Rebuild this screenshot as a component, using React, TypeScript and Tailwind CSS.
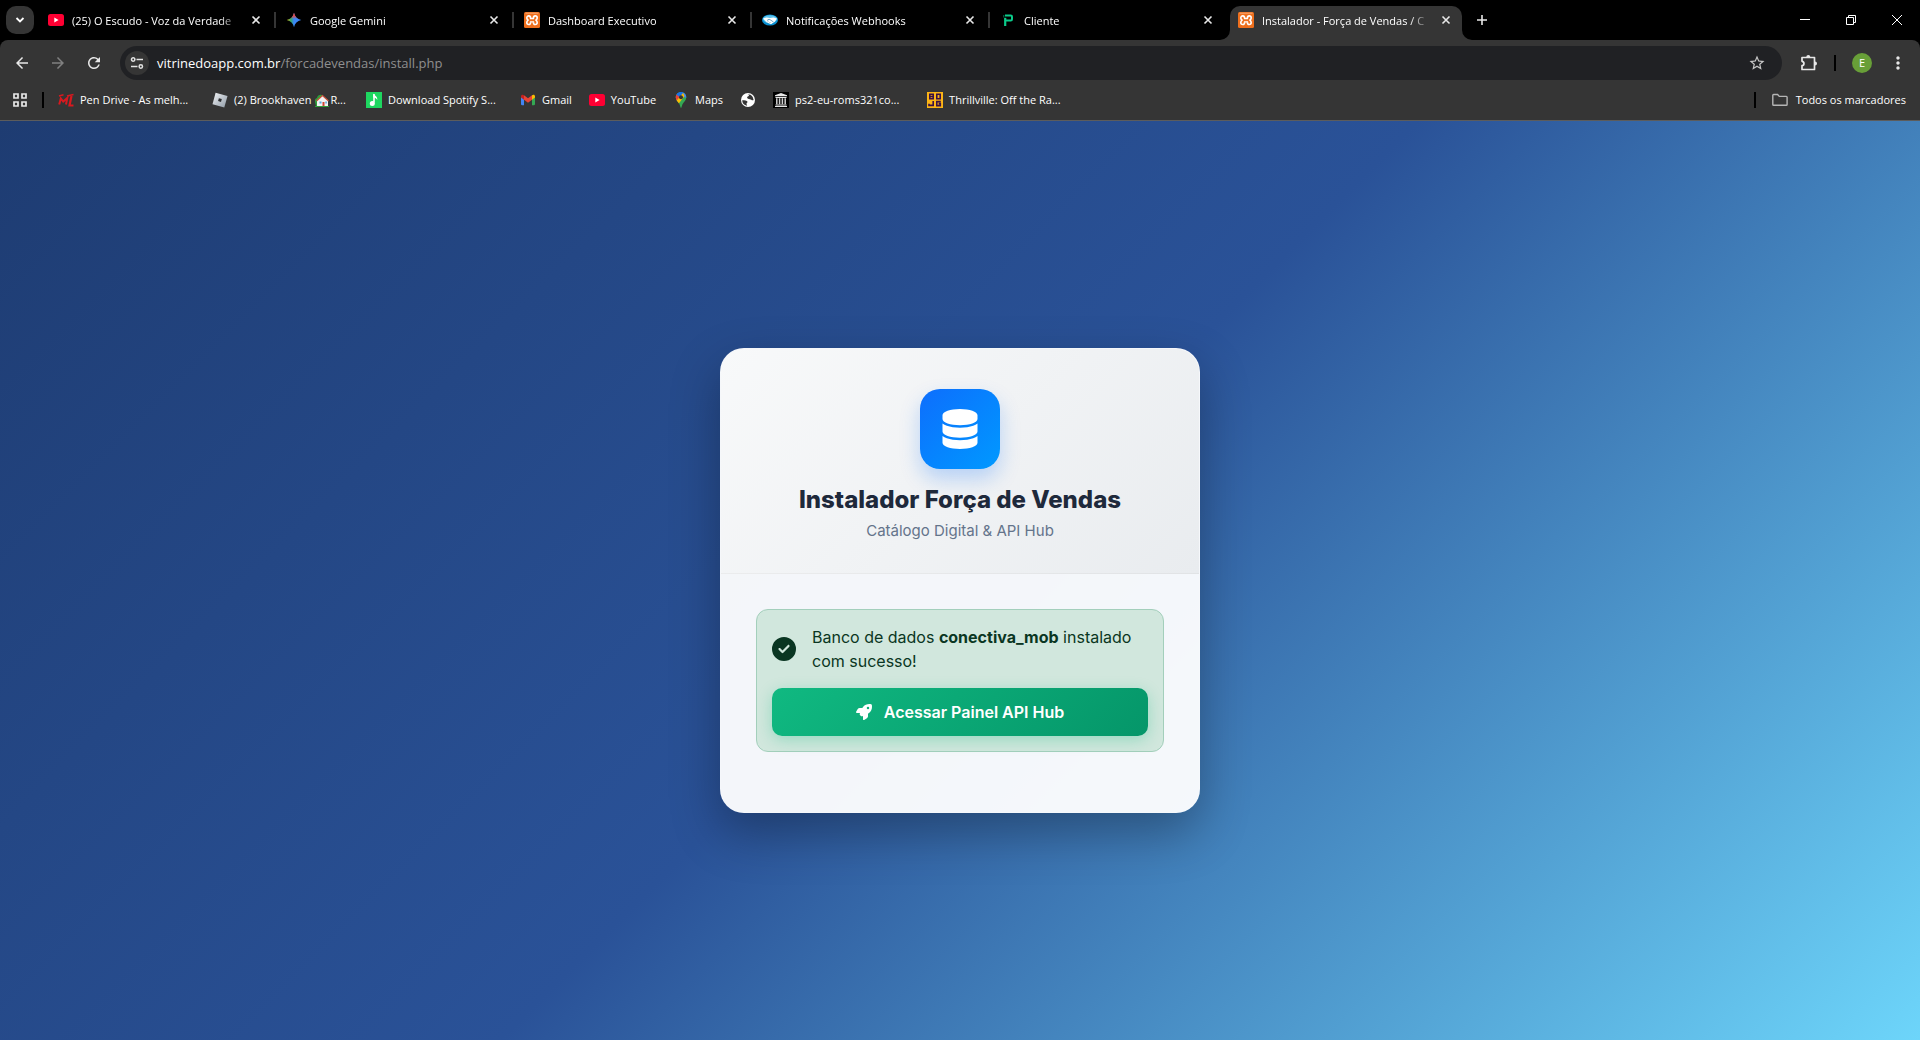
import { useState } from "react";
import type { ReactNode } from "react";
import { FaCircleCheck, FaDatabase, FaRocket } from "react-icons/fa6";
import {
  MdArrowBack,
  MdArrowForward,
  MdMoreVert,
  MdRefresh,
  MdStarBorder,
} from "react-icons/md";

function YouTubeIcon() {
  return (
    <svg viewBox="0 0 16 16" className="size-4 shrink-0">
      <rect y="2" width="16" height="12" rx="2.5" fill="#ff0033" />
      <path d="M6.3 5.6 10.6 8l-4.3 2.4z" fill="#fff" />
    </svg>
  );
}

function GeminiIcon() {
  return (
    <svg viewBox="0 0 16 16" className="size-4 shrink-0">
      <defs>
        <linearGradient id="gem-base" x1="0" y1="0.5" x2="1" y2="0.5">
          <stop offset="0" stopColor="#f5c518" />
          <stop offset="0.28" stopColor="#2fa866" />
          <stop offset="0.5" stopColor="#3b86f7" />
          <stop offset="1" stopColor="#3b86f7" />
        </linearGradient>
        <linearGradient id="gem-top" x1="0" y1="0" x2="0" y2="1">
          <stop offset="0" stopColor="#f0443a" />
          <stop offset="0.2" stopColor="#f0443a" />
          <stop offset="0.42" stopColor="#f0443a" stopOpacity="0" />
        </linearGradient>
      </defs>
      <path d="M8 .8c.9 4 3.200 6.300 7.200 7.200-4 .9-6.300 3.200-7.200 7.200C7.100 11.200 4.800 8.900.8 8 4.800 7.100 7.100 4.800 8 .8z" fill="url(#gem-base)" />
      <path d="M8 .8c.9 4 3.200 6.300 7.200 7.200-4 .9-6.300 3.200-7.200 7.200C7.100 11.200 4.800 8.900.8 8 4.800 7.100 7.100 4.800 8 .8z" fill="url(#gem-top)" />
    </svg>
  );
}

function XamppIcon() {
  return (
    <svg viewBox="0 0 16 16" className="size-4 shrink-0">
      <rect width="16" height="16" rx="1.5" fill="#ee6f1d" />
      <path d="M1.500 1.200h13" stroke="#f7b98a" strokeWidth="0.8" />
      <g fill="none" stroke="#fff" strokeWidth="1.600" strokeLinejoin="round">
        <path d="M6.600 6.200C6.600 4.700 6 3.900 4.800 3.900S2.800 4.700 2.800 5.900c0 1.100.5 1.600 1.300 2.300-.8.700-1.300 1.200-1.300 2.300 0 1.200.8 2 2 2s1.800-.8 1.800-2.300" />
        <path d="M9.400 6.200c0-1.500.6-2.300 1.800-2.300s2 .8 2 2c0 1.100-.5 1.600-1.300 2.300.8.700 1.300 1.200 1.300 2.300 0 1.200-.8 2-2 2s-1.800-.8-1.800-2.300" />
        <path d="M5.900 6.500h4.200M5.900 9.900h4.200" strokeWidth="1.400" />
      </g>
    </svg>
  );
}

function HandshakeIcon() {
  return (
    <svg viewBox="0 0 16 16" className="size-4 shrink-0">
      <ellipse cx="8" cy="8" rx="8" ry="5.500" fill="#0a8fd0" />
      <ellipse cx="8" cy="7.200" rx="6.800" ry="4" fill="#5cc3ee" />
      <path d="M1 6.500 4.500 5.600 8 6l3.500-.5 3.500 1-2.300 3.300L9 12.200l-4-1.700z" fill="#fff" />
      <path d="m5 8.500 2-1.300 1.500.8 3 2M5.500 10l1-.8M7.500 11l.8-.8" stroke="#0a6ea6" strokeWidth="0.6" fill="none" />
    </svg>
  );
}

function PIcon() {
  return (
    <svg viewBox="0 0 16 16" className="size-4 shrink-0">
      <path d="M5 3.500h5.700c.8 0 1.300.5 1.300 1.300v2.400c0 .8-.5 1.300-1.300 1.300H6" fill="none" stroke="#0bcb8a" strokeWidth="2" />
      <path d="M5.200 5.800V14" stroke="#0bcb8a" strokeWidth="2.200" />
      <path d="M3.800 3v2.500" stroke="#067a55" strokeWidth="1" />
    </svg>
  );
}

function CloseIcon() {
  return (
    <svg viewBox="0 0 12 12" className="size-3" stroke="#e8e8e8" strokeWidth="1.600">
      <path d="m2.500 2.500 7 7M9.500 2.500l-7 7" />
    </svg>
  );
}

function PenDriveIcon() {
  return (
    <svg viewBox="0 0 16 16" className="size-4 shrink-0" fill="none" stroke="#d8191f">
      <path d="M1.200 12.500 2.800 6.500 5.200 9.500 9.300 6 8 12.500" strokeWidth="2" />
      <path d="M13.500 4 11.500 13.500h4" strokeWidth="2.200" />
      <path d="M1 4 5.500 2.800M9 4 15.500 2.500" strokeWidth="1.600" />
    </svg>
  );
}

function RobloxIcon() {
  return (
    <svg viewBox="0 0 16 16" className="size-4 shrink-0">
      <defs>
        <linearGradient id="rbx" x1="0" y1="0" x2="1" y2="1">
          <stop offset="0" stopColor="#f2f4f6" />
          <stop offset="1" stopColor="#8d99a5" />
        </linearGradient>
      </defs>
      <path d="M3.600.8 15.500 4 12.300 15.500.500 12.300z" fill="url(#rbx)" />
      <path d="m6.900 6.200 2.900.8-.8 2.900-2.900-.8z" fill="#2b2d30" />
    </svg>
  );
}

function HouseIcon() {
  return (
    <svg viewBox="0 0 14 14" className="mx-[1px] inline-block size-[14px] align-[-3px]">
      <path d="M0 9a3 3 0 0 1 2-4 3.500 3.500 0 0 1 5-3l2 11H1z" fill="#2f9e3a" />
      <path d="M2 7.500 7.500 2.500l5.500 5V13H2z" fill="#f3f3f3" />
      <path d="M1.500 8 7.500 2.500l6 5.500" fill="none" stroke="#c9503a" strokeWidth="1.200" />
      <path d="M7.500 9h2v4h-2z" fill="#cf4436" />
      <path d="M4.500 8.500h2v2h-2zM10.300 8.500h1.500v2h-1.500z" fill="#56a9e0" />
      <path d="M0 13.500h14" stroke="#2f9e3a" />
    </svg>
  );
}

function MusicIcon() {
  return (
    <svg viewBox="0 0 16 16" className="size-4 shrink-0">
      <rect width="16" height="16" fill="#1ed760" />
      <path d="M8 2v8.500" stroke="#fff" strokeWidth="1.600" />
      <path d="M7.300 1.500c.9 2 4.500 2.600 4 6.500-.8-1.600-2-2.300-4-2.500z" fill="#fff" />
      <circle cx="6.300" cy="11.600" r="2.500" fill="#fff" />
    </svg>
  );
}

function GmailIcon() {
  return (
    <svg viewBox="0 0 16 16" className="size-4 shrink-0">
      <path d="M1 4.500V12a1.200 1.200 0 0 0 1.200 1.200H4V7z" fill="#4285f4" />
      <path d="M15 4.500V12a1.200 1.200 0 0 1-1.200 1.200H12V7z" fill="#34a853" />
      <path d="M4 3.300v4.500l4 3 4-3V3.300l-4 3z" fill="#ea4335" />
      <path d="M1 4.300v1.300l3 2.200V3.300l-.8-.4C2.200 2.300 1 3 1 4.300z" fill="#c5221f" />
      <path d="M15 4.300v1.300l-3 2.200V3.300l.8-.4c1-.6 2.200.1 2.200 1.400z" fill="#fbbc04" />
    </svg>
  );
}

function MapsIcon() {
  return (
    <svg viewBox="0 0 16 16" className="size-4 shrink-0">
      <defs>
        <clipPath id="pin">
          <path d="M8 0a5.300 5.300 0 0 1 5.300 5.300c0 3-2.400 4.400-3.800 7C8.800 13.600 8.700 16 8 16s-.8-2.400-1.500-3.700c-1.400-2.600-3.800-4-3.800-7A5.300 5.300 0 0 1 8 0z" />
        </clipPath>
      </defs>
      <g clipPath="url(#pin)">
        <path d="M0 0h16v16H0z" fill="#34a853" />
        <path d="M16 0v6L10 5 7 3l3-3z" fill="#4285f4" />
        <path d="M2 3 5 0h6L6.500 5.500z" fill="#1a73e8" />
        <path d="M2 1.500 6.500 5 2.500 9.500z" fill="#ea4335" />
        <path d="M2.500 9.500 10 1l1.500 3-6.500 8.500z" fill="#fbbc04" />
        <path d="M2 2.500 6 5.500 3 9z" fill="#ea4335" />
        <path d="M4 0h6L7 4 3 2z" fill="#1a73e8" />
      </g>
      <circle cx="8" cy="5.300" r="2" fill="#353535" />
    </svg>
  );
}

function GlobeIcon() {
  return (
    <svg viewBox="0 0 16 16" className="size-4 shrink-0">
      <circle cx="8" cy="8" r="7" fill="#fff" />
      <path d="M2.200 8.200c2.500 0 4.800.2 5.300 1.500.3 1-1.200 1.200-1 2.200.1.800.8 1.200.6 1.800C4 13.300 2.200 11 2.200 8.200z" fill="#353535" />
      <path d="M7.500 2.300c2 0 4 .7 5.200 2.700l.9 3c-1.300 1-2.400-.4-3.800-.7C8.600 7 7.200 7 7.100 5.600 7 4.400 8.800 4.600 9 3.600c.1-.6-.9-.9-1.500-1.300z" fill="#353535" />
    </svg>
  );
}

function ArchiveIcon() {
  return (
    <svg viewBox="0 0 16 16" className="size-4 shrink-0">
      <path d="M0 0h16v16H0z" fill="#000" />
      <path d="m8 1 6 2.300v.9H2v-.9zM2.500 4.900h11v1h-11zM2.500 12.500h11v.9h-11zM2 14h12v1H2z" fill="#e6e6e6" />
      <path d="M3.800 6.200v6M6.600 6.200v6M9.400 6.200v6M12.200 6.200v6" stroke="#d0d0d0" strokeWidth="1.500" />
    </svg>
  );
}

function RetroIcon() {
  return (
    <svg viewBox="0 0 16 16" className="size-4 shrink-0">
      <path d="M0 0h16v16H0z" fill="#fbb416" />
      <g fill="none" stroke="#3a1145" strokeWidth="1.600">
        <path d="M2.800 2.300h3.400v4.400H2.800zM2.800 4.500h3.400M9.800 2.300h3.400v4.400H9.800z" />
        <path d="M6.200 9v4.400H2v-1.600M13.800 9.600h-4v4h3.500v-2h-1.600" />
      </g>
    </svg>
  );
}

function TuneIcon() {
  return (
    <svg viewBox="0 0 14 14" className="size-[14px]" fill="none" stroke="#e3e3e3" strokeWidth="1.500">
      <circle cx="3.200" cy="3.500" r="1.700" />
      <path d="M6.500 3.500H13" />
      <circle cx="10.800" cy="10.500" r="1.700" />
      <path d="M1 10.500h6.500" />
    </svg>
  );
}

function PuzzleIcon() {
  return (
    <svg viewBox="0 0 18 18" className="size-[18px]">
      <path
        d="M2 3.500h12.500v12H2v-3.800c2.600-.3 2.600-4.100 0-4.400z"
        fill="none"
        stroke="#e8e8e8"
        strokeWidth="1.700"
        strokeLinejoin="round"
      />
      <path d="M6.300 3a2 2 0 0 1 4 0zM15 7.500a2 2 0 0 1 0 4z" fill="#e8e8e8" />
    </svg>
  );
}

const tabs = [
  { title: "(25) O Escudo - Voz da Verdade", icon: <YouTubeIcon /> },
  { title: "Google Gemini", icon: <GeminiIcon /> },
  { title: "Dashboard Executivo", icon: <XamppIcon /> },
  { title: "Notificações Webhooks", icon: <HandshakeIcon /> },
  { title: "Cliente", icon: <PIcon /> },
  { title: "Instalador - Força de Vendas / C", icon: <XamppIcon /> },
];

const bookmarks: { label: ReactNode; icon: ReactNode; long?: boolean }[] = [
  { label: "Pen Drive - As melh...", icon: <PenDriveIcon />, long: true },
  { label: <>(2) Brookhaven <HouseIcon />R...</>, icon: <RobloxIcon />, long: true },
  { label: "Download Spotify S...", icon: <MusicIcon />, long: true },
  { label: "Gmail", icon: <GmailIcon /> },
  { label: "YouTube", icon: <YouTubeIcon /> },
  { label: "Maps", icon: <MapsIcon /> },
  { label: "", icon: <GlobeIcon /> },
  { label: "ps2-eu-roms321co...", icon: <ArchiveIcon />, long: true },
  { label: "Thrillville: Off the Ra...", icon: <RetroIcon />, long: true },
];

function TabFoot({ side }: { side: "left" | "right" }) {
  return (
    <svg
      viewBox="0 0 10 10"
      className={
        side === "left"
          ? "absolute bottom-0 -left-[10px] size-[10px]"
          : "absolute bottom-0 -right-[10px] size-[10px]"
      }
    >
      <path
        d={side === "left" ? "M10 0v10H0A10 10 0 0 0 10 0z" : "M0 0v10h10A10 10 0 0 1 0 0z"}
        fill="#353535"
      />
    </svg>
  );
}

function TabStrip() {
  const active = tabs.length - 1;

  return (
    <div className="flex h-10 items-end bg-black pl-[6px]">
      <button
        type="button"
        aria-label="Pesquisar guias"
        className="mb-[6px] flex size-7 shrink-0 items-center justify-center rounded-[10px] bg-[#353535]"
      >
        <svg viewBox="0 0 12 12" className="size-3" fill="none" stroke="#fff" strokeWidth="1.800">
          <path d="m2.500 4 3.500 3.500L9.500 4" />
        </svg>
      </button>
      <div className="ml-1 flex min-w-0 flex-1">
        {tabs.map((tab, i) => (
          <div
            key={tab.title}
            className={
              i === active
                ? "relative ml-[2px] flex h-[34px] w-[232px] min-w-0 items-center rounded-t-[10px] bg-[#353535] pr-[10px] pb-[6px] pl-2"
                : "relative flex h-[34px] w-[238px] min-w-0 items-center pr-[14px] pb-[6px] pl-[10px]"
            }
          >
            {i === active && <TabFoot side="left" />}
            {i === active && <TabFoot side="right" />}
            {tab.icon}
            <span className="ml-2 min-w-0 flex-1 overflow-hidden [mask-image:linear-gradient(to_right,#000_calc(100%-20px),transparent)] pt-[2px] text-[11px] leading-4 whitespace-nowrap text-white">
              {tab.title}
            </span>
            <button type="button" aria-label="Fechar guia" className="ml-[10px] shrink-0">
              <CloseIcon />
            </button>
            {i < active - 1 && (
              <span className="absolute top-[6px] right-0 h-4 w-[2px] bg-[#353535]" />
            )}
          </div>
        ))}
        <button
          type="button"
          aria-label="Nova guia"
          className="ml-[14px] flex h-[28px] w-3 shrink-0 items-center"
        >
          <svg viewBox="0 0 12 12" className="size-3" stroke="#e8e8e8" strokeWidth="1.600">
            <path d="M6 1v10M1 6h10" />
          </svg>
        </button>
      </div>
      <div className="flex h-10 shrink-0">
        <button type="button" aria-label="Minimizar" className="flex w-[46px] items-center justify-center">
          <svg viewBox="0 0 10 10" className="size-[10px]" stroke="#fff"><path d="M0 4.500h10" /></svg>
        </button>
        <button type="button" aria-label="Restaurar" className="flex w-[46px] items-center justify-center">
          <svg viewBox="0 0 10 10" className="size-[10px]" fill="none" stroke="#fff">
            <path d="M.5 2.500h7v7h-7zM2.500 2.500v-2h7v7h-2" />
          </svg>
        </button>
        <button type="button" aria-label="Fechar" className="flex w-[46px] items-center justify-center">
          <svg viewBox="0 0 10 10" className="size-[10px]" stroke="#fff"><path d="m0 0 10 10M10 0 0 10" /></svg>
        </button>
      </div>
    </div>
  );
}

function Toolbar() {
  const [url, setUrl] = useState("vitrinedoapp.com.br/forcadevendas/install.php");
  const slash = url.indexOf("/");
  const host = slash < 0 ? url : url.slice(0, slash);
  const path = slash < 0 ? "" : url.slice(slash);

  return (
    <div className="flex h-[46px] items-center rounded-t-lg bg-[#353535] py-[6px] text-[#e8e8e8]">
      <button type="button" aria-label="Voltar" className="ml-[13px]">
        <MdArrowBack className="size-[18px]" />
      </button>
      <button type="button" aria-label="Avançar" className="ml-[18px] text-[#808080]">
        <MdArrowForward className="size-[18px]" />
      </button>
      <button type="button" aria-label="Recarregar" className="ml-[18px]">
        <MdRefresh className="size-[18px]" />
      </button>
      <div className="ml-[17px] flex h-[34px] flex-1 items-center rounded-full bg-[#202124] pr-4 pl-[5px]">
        <button
          type="button"
          aria-label="Informações do site"
          className="flex size-6 items-center justify-center rounded-full bg-[#353535]"
        >
          <TuneIcon />
        </button>
        {/* the input keeps its own text invisible, the overlay dims the path */}
        <div className="relative ml-2 h-5 flex-1 text-[13px] leading-5">
          <span aria-hidden="true" className="pointer-events-none absolute inset-0 text-white">
            {host}
            <span className="text-[#8f8f8f]">{path}</span>
          </span>
          <input
            type="text"
            aria-label="Barra de endereço"
            value={url}
            onChange={(e) => setUrl(e.target.value)}
            className="block w-full bg-transparent text-transparent caret-white outline-none"
          />
        </div>
        <button type="button" aria-label="Adicionar aos favoritos">
          <MdStarBorder className="size-[18px] text-[#c7c7c7]" />
        </button>
      </div>
      <button type="button" aria-label="Extensões" className="ml-[18px]">
        <PuzzleIcon />
      </button>
      <span className="ml-4 h-4 w-[2px] bg-black" />
      <button
        type="button"
        aria-label="Perfil"
        className="ml-4 flex size-5 items-center justify-center rounded-full bg-[#689f38] text-[11px] text-white"
      >
        E
      </button>
      <button type="button" aria-label="Menu" className="mr-3 ml-4">
        <MdMoreVert className="size-5" />
      </button>
    </div>
  );
}

function BookmarksBar() {
  return (
    <nav className="flex h-[35px] items-center border-b border-[#5c5c5c] bg-[#353535] pr-[14px] pb-[6px] pl-[13px] text-[11px] leading-4 text-white">
      <button type="button" aria-label="Aplicativos">
        <svg viewBox="0 0 14 14" className="size-[14px]" fill="none" stroke="#e8e8e8" strokeWidth="1.700">
          <path d="M1 1h4v4H1zM9 1h4v4H9zM1 9h4v4H1zM9 9h4v4H9z" />
        </svg>
      </button>
      <span className="ml-[15px] h-4 w-[2px] bg-black" />
      <div className="ml-[14px] flex min-w-0 flex-1 gap-[17px] overflow-hidden">
        {bookmarks.map((b, i) => (
          <a key={i} href="#" className="flex shrink-0 items-center gap-[6px]">
            {b.icon}
            {b.label && (
              <span className={b.long ? "w-[115px] whitespace-nowrap" : "whitespace-nowrap"}>
                {b.label}
              </span>
            )}
          </a>
        ))}
      </div>
      <span className="h-4 w-[2px] shrink-0 bg-black" />
      <a href="#" className="ml-4 flex shrink-0 items-center gap-2">
        <svg viewBox="0 0 16 16" className="size-4" fill="none" stroke="#b5b5b5" strokeWidth="1.400">
          <path d="M.8 12.500V3.300c0-.5.3-.8.800-.8h4l1.700 1.900h7c.5 0 .8.300.8.800v7.300c0 .5-.3.800-.8.800H1.600c-.5 0-.8-.3-.8-.8z" />
        </svg>
        Todos os marcadores
      </a>
    </nav>
  );
}

export default function App() {
  return (
    <div className="flex min-h-screen flex-col bg-black">
      <header className="font-['Open_Sans','Noto_Sans',sans-serif]">
        <TabStrip />
        <Toolbar />
        <BookmarksBar />
      </header>
      <main className="flex flex-1 items-center justify-center bg-[linear-gradient(135deg,#1e3c72_0%,#2a5298_50%,#6dd5fa_100%)] p-5 font-['Inter',sans-serif]">
        <div className="w-full max-w-[480px] overflow-hidden rounded-3xl border border-white/20 bg-white/95 shadow-[0_20px_50px_rgba(0,0,0,0.3)]">
          <div className="flex flex-col items-center border-b border-black/5 bg-[linear-gradient(135deg,#f8f9fa_0%,#e9ecef_100%)] px-[30px] pt-10 pb-[30px] text-center">
            <div className="mb-4 flex size-20 items-center justify-center rounded-[20px] bg-[linear-gradient(135deg,#0d6efd_0%,#0099ff_100%)] shadow-[0_10px_20px_rgba(13,110,253,0.25)]">
              <FaDatabase className="size-10 text-white" />
            </div>
            <h1 className="mb-1 text-2xl leading-[30px] font-extrabold text-[#1e293b]">
              Instalador Força de Vendas
            </h1>
            <p className="text-[15px] leading-6 text-[#64748b]">Catálogo Digital &amp; API Hub</p>
          </div>
          <div className="p-[35px]">
            <div className="mb-[25px] rounded-xl border border-[#a3cfbb] bg-[#d1e7dd] p-[15px] text-[#0a3622]">
              <div role="status" className="flex items-center gap-4">
                <FaCircleCheck className="size-6 shrink-0" />
                <p className="text-base leading-6">
                  Banco de dados <strong className="font-bold">conectiva_mob</strong> instalado com
                  sucesso!
                </p>
              </div>
              <a
                href="#"
                className="mt-[15px] flex h-12 items-center justify-center gap-3 rounded-[10px] bg-[linear-gradient(135deg,#10b981_0%,#059669_100%)] text-base font-semibold text-white shadow-[0_4px_15px_rgba(16,185,129,0.3)]"
              >
                <FaRocket className="size-4" />
                Acessar Painel API Hub
              </a>
            </div>
          </div>
        </div>
      </main>
    </div>
  );
}
